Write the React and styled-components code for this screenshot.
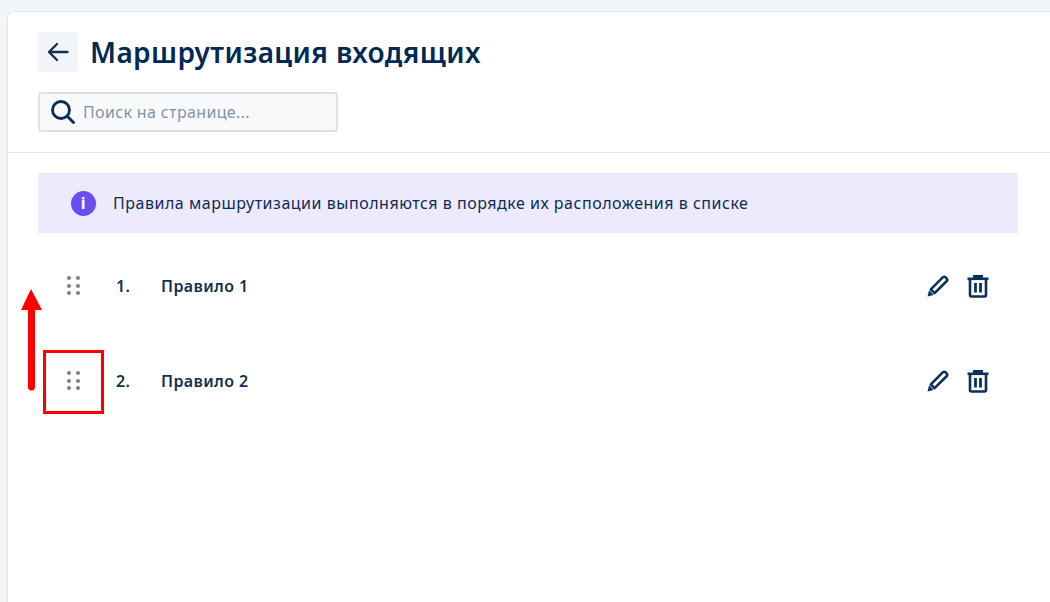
import React from "react"
import styled, { createGlobalStyle } from "styled-components"

const GlobalStyle = createGlobalStyle`
  html, body {
    margin: 0;
    height: 100%;
    overflow: hidden;
    background: #f3f6f9;
    font-family: "Noto Sans", "Open Sans", sans-serif;
  }
`;

const Page = styled.div`
  position: relative;
  width: 1050px;
  height: 602px;
  padding: 11px 0 0 7px;
  box-sizing: border-box;
`;

const Card = styled.div`
  height: 591px;
  background: #fff;
  border: 1px solid #e3e7ed;
  border-right: none;
  border-bottom: none;
  border-top-left-radius: 6px;
  box-sizing: border-box;
`;

const Header = styled.div`
  padding: 20px 30px 20px;
  border-bottom: 1px solid #e1e4e9;
  height: 141px;
  box-sizing: border-box;
`;

const TitleRow = styled.div`
  display: flex;
  align-items: center;
  gap: 12px;
`;

const BackButton = styled.div`
  width: 40px;
  height: 40px;
  border-radius: 4px;
  background: #f1f4f8;
  display: flex;
  align-items: center;
  justify-content: center;
`;

const Title = styled.h1`
  margin: 0;
  font-size: 28px;
  font-weight: 600;
  letter-spacing: 0.41px;
  color: #002a54;
  line-height: 40px;
`;

const Search = styled.div`
  margin-top: 20px;
  width: 300px;
  height: 40px;
  border: 2px solid #dde2ea;
  border-radius: 3px;
  background: #f8fafc;
  box-sizing: border-box;
  display: flex;
  align-items: center;
  gap: 8px;
  padding-left: 11px;
`;

const Placeholder = styled.span`
  font-size: 16px;
  letter-spacing: 0.36px;
  color: #7f93ad;
`;

const Content = styled.div`
  padding: 20px 32px 0 30px;
`;

const Banner = styled.div`
  height: 60px;
  background: #eeeafd;
  display: flex;
  align-items: center;
  gap: 17px;
  padding-left: 33px;
  font-size: 16px;
  letter-spacing: 0.52px;
  color: #0b2d52;
`;

const InfoIcon = styled.div`
  width: 25px;
  height: 25px;
  border-radius: 50%;
  background: #6b4ef0;
  color: #fff;
  font-size: 16px;
  font-weight: 700;
  line-height: 25px;
  text-align: center;
`;

const List = styled.div`
  margin-top: 5px;
`;

const Row = styled.div`
  height: 95px;
  display: flex;
  align-items: center;
  padding-left: 29px;
  padding-right: 28px;
  color: #0f3054;
  font-size: 16px;
  font-weight: 600;
  letter-spacing: 0.4px;
`;

const Grip = styled.div`
  width: 14px;
  display: grid;
  grid-template-columns: 4px 4px;
  gap: 3.8px 4.7px;
  margin-right: 35px;
`;

const Dot = styled.span`
  width: 4px;
  height: 4px;
  border-radius: 50%;
  background: #7d7f84;
`;

const Index = styled.span`
  width: 45px;
`;

const Name = styled.span`
  flex: 1;
`;

const Actions = styled.div`
  display: flex;
  align-items: center;
  gap: 17px;
`;

const Marker = styled.div`
  position: absolute;
  left: 43px;
  top: 350px;
  width: 61px;
  height: 64px;
  border: 3px solid #ff0000;
  box-sizing: border-box;
`;

const ArrowOverlay = styled.svg`
  position: absolute;
  left: 20px;
  top: 287px;
`;

function BackArrow() {
  return (
    <svg width="22" height="22" viewBox="0 0 22 22" fill="none" stroke="#0f3054" strokeWidth="2.3" strokeLinecap="round" strokeLinejoin="round">
      <path d="M20.5 11H2M10 3l-8 8 8 8" />
    </svg>
  );
}

function SearchIcon() {
  return (
    <svg width="24" height="24" viewBox="0 0 24 24" fill="none" stroke="#0d2c52" strokeWidth="2.8" strokeLinecap="round">
      <circle cx="10" cy="10" r="8.5" />
      <path d="M16.5 16.5L22.5 22.5" />
    </svg>
  );
}

function PencilIcon() {
  return (
    <svg width="22" height="22" viewBox="0 0 22 22" fill="none" stroke="#0a3159" strokeWidth="2.6" strokeLinejoin="round">
      <path d="M16 2.2a1.6 1.6 0 0 1 2.3 0l1.5 1.5a1.6 1.6 0 0 1 0 2.3L7.6 18.2l-3.8-3.8z" />
      <path d="M0.5 21.5l1.6-6.2 4.6 4.6z" fill="#0a3159" stroke="none" />
    </svg>
  );
}

function TrashIcon() {
  return (
    <svg width="24" height="24" viewBox="0 0 24 24" fill="none" stroke="#0a3159" strokeWidth="2.6">
      <path d="M1.5 4.8h21" />
      <path d="M7 4V1h10v3z" fill="#0a3159" stroke="none" />
      <path d="M4 5v16a1.5 1.5 0 0 0 1.5 1.5h13A1.5 1.5 0 0 0 20 21V5" />
      <path d="M9.5 9v9.5M14.5 9v9.5" strokeWidth="2.8" />
    </svg>
  );
}

const rules = ["Правило 1", "Правило 2"];

export default function App() {
  return (
    <Page>
      <GlobalStyle />
      <Card>
        <Header>
          <TitleRow>
            <BackButton>
              <BackArrow />
            </BackButton>
            <Title>Маршрутизация входящих</Title>
          </TitleRow>
          <Search>
            <SearchIcon />
            <Placeholder>Поиск на странице...</Placeholder>
          </Search>
        </Header>
        <Content>
          <Banner>
            <InfoIcon>i</InfoIcon>
            Правила маршрутизации выполняются в порядке их расположения в списке
          </Banner>
          <List>
            {rules.map((rule, idx) => (
              <Row key={rule}>
                <Grip>
                  {[0, 1, 2, 3, 4, 5].map((d) => (
                    <Dot key={d} />
                  ))}
                </Grip>
                <Index>{idx + 1}.</Index>
                <Name>{rule}</Name>
                <Actions>
                  <PencilIcon />
                  <TrashIcon />
                </Actions>
              </Row>
            ))}
          </List>
        </Content>
      </Card>
      <ArrowOverlay width="24" height="106" viewBox="0 0 24 106">
        <path d="M11.5 20V100" stroke="#ff0000" strokeWidth="7" strokeLinecap="round" />
        <path d="M11 2L22 23H1z" fill="#ff0000" />
      </ArrowOverlay>
      <Marker />
    </Page>
  );
}
